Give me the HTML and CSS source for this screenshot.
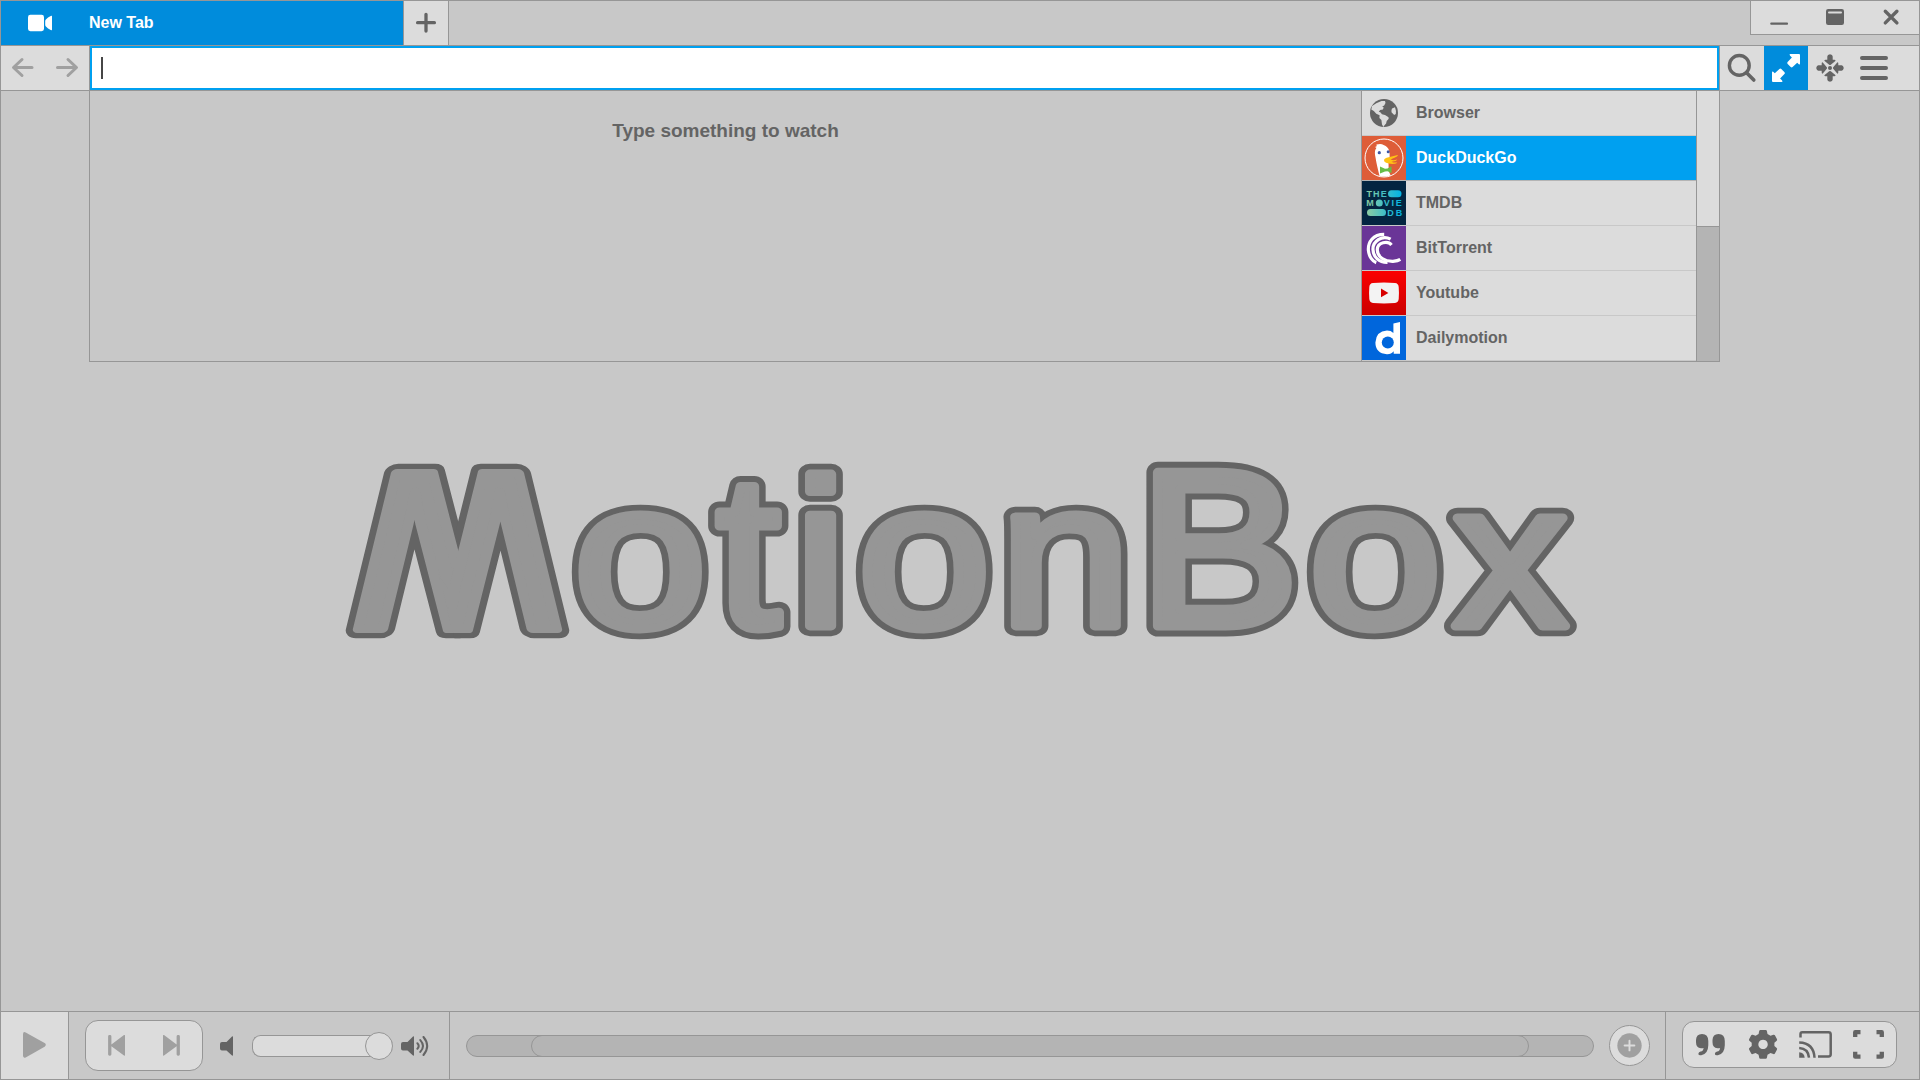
FILE: index.html
```html
<!DOCTYPE html>
<html lang="en">
<head>
<meta charset="utf-8">
<title>MotionBox</title>
<link rel="stylesheet" href="styles.css">
</head>
<body>
<div class="window">
  <header class="tabbar">
    <div class="tab">
      <svg class="tab-icon" viewBox="0 0 88 44"><rect x="27" y="13.8" width="16" height="16.4" rx="2.4"/><path d="M50.2 14.8q.8-.3.8.6v13.2q0 .9-.8.6q-3.6-1.600-5.300-3.700q-.7-.8-.7-1.700v-3.600q0-.9.700-1.700q1.700-2.100 5.300-3.700z"/></svg>
      <span>New Tab</span>
    </div>
    <button class="tab-add" aria-label="New tab"><svg viewBox="0 0 44 44"><path class="line plus" d="M13.600 21.700h16.800M22 13.300v16.800"/></svg></button>
    <div class="controls">
      <svg viewBox="0 0 168 33"><path class="line thin" d="M20.300 22.700h15.700"/><rect class="solid" x="75" y="8" width="18" height="16" rx="2.200"/><rect class="gloss" x="77" y="10.600" width="14" height="2" rx="1"/><path class="line cross" d="M134.300 10.300l11.600 11.600M145.900 10.300l-11.600 11.600"/></svg>
    </div>
  </header>

  <div class="toolbar">
    <div class="nav"><svg viewBox="0 0 88 44"><path d="M31 21.500h-18M21 13.500l-8.500 8l8.500 8M56.500 21.500h18M67 13.500l8.500 8l-8.500 8"/></svg></div>
    <div class="address"><i class="caret"></i></div>
    <div class="tools">
      <svg viewBox="0 0 44 44"><circle class="line search" cx="19.300" cy="19.400" r="9.900"/><path class="line handle" d="M26.800 27l7 7"/></svg>
      <svg class="active" viewBox="0 0 44 44"><path id="expand-arrow" d="M26.300 8H35q1 0 1 1v8.600q0 1.400-1.200.7l-1.600-1.500l-4.600 4.200q-1 .8-1.900-.1l-3-3q-1-1-.1-2l4.300-4.500l-1.800-1.700q-1.300-1.700.2-1.700z"/><use href="#expand-arrow" transform="rotate(180 22 22)"/></svg>
      <svg viewBox="0 0 44 44"><g class="solid"><circle cx="22" cy="22" r="2"/><path id="inward" d="M22 8.200q2.700.5 2.700 2.200v3.300h1.800q1.900.2.600 1.500l-4.300 3.600q-.8.600-1.600 0l-4.300-3.600q-1.300-1.300.6-1.500h1.800v-3.300q0-1.700 2.700-2.200z"/><use href="#inward" transform="rotate(90 22 22)"/><use href="#inward" transform="rotate(180 22 22)"/><use href="#inward" transform="rotate(270 22 22)"/></g></svg>
      <svg viewBox="0 0 44 44"><path class="line menu" d="M10 12h24M10 22h24M10 32h24"/></svg>
    </div>
  </div>

  <main class="stage">
    <section class="browse">
      <p class="hint">Type something to watch</p>
      <ul class="sources">
        <li><svg viewBox="0 0 44 44"><circle class="solid" cx="22" cy="22" r="14"/><path fill="#dcdcdc" d="M14.300 12.200l5.200-2.300l3.500.2l.5 2l-1.300 2.500l-2 .8l1.500 1.200l-.8 2l-2.700.3l-1.400 1.800l1.500.5l1.700 2l3 .7l2.800 1.800q1.600.8.700 2.400l-1.800 2l-.6 2.500l-1.800 2l-.8 1.300l-1.500-2.300l-.6-4.700l-2-2l.2-2.700l-3.300-1.500l-2.500-2.800l-2.500-1.500l.8-3.400zM30 17.500l3-1.200q1.300 3.200.8 6.700l-1.600 1l-2.700-2.800q-.3-2 .5-3.700z"/></svg><span>Browser</span></li>
        <li class="selected"><svg viewBox="0 0 44 44"><path fill="#de5d38" d="M0 0h44v44H0z"/><clipPath id="duck-disc"><circle cx="22" cy="22" r="18.600"/></clipPath><g clip-path="url(#duck-disc)"><path fill="#fff" d="M13.600 11.700q-.6-1.400 1.200-1.500l-.4-1.700q4.600-1.300 7.200.4q4.700 1.700 5.600 6.200q.7 4 .3 7.900l-1 4l.2 8l3 7H18q-3.500-14-4.300-19.500q-2-7.800.8-10.800z"/></g><path fill="#ffc214" d="M22 24.300q0-2.300 4.700-3.100l9-2.100q.8.900-2.700 2.400l-4.500 2q3.500 1.400 6.300 0q.9.400-1.300 1.600l-4 .6q3 1.500 5.300.5q.5 1.500-4.300 1.700q-8.500-.5-8.500-3.600z"/><g fill="#3d56a5"><circle cx="17.300" cy="16.700" r="1.600"/><circle cx="26.200" cy="15.800" r="1.500"/></g><path fill="#67bd47" d="M18 30.600l5 2.200l2.500-.2l4-2.300v6.600l-4-1.700l-2.500.4l-5 1.900z"/><circle class="disc-ring" cx="22" cy="22" r="19"/></svg><span>DuckDuckGo</span></li>
        <li><svg viewBox="0 0 44 44"><defs><linearGradient id="teal" gradientUnits="userSpaceOnUse" x1="4" y1="0" x2="40" y2="0"><stop offset="0" stop-color="#90cea1"/><stop offset=".55" stop-color="#3cbec9"/><stop offset="1" stop-color="#00b3e5"/></linearGradient></defs><path fill="#032541" d="M0 0h44v44H0z"/><g fill="url(#teal)"><rect x="26" y="9.200" width="13.500" height="7" rx="3.500"/><circle cx="17.300" cy="22" r="3.500"/><rect x="5" y="28" width="19" height="7" rx="3.500"/><g class="tmdb"><text x="4.400" y="15.700" textLength="20.300">THE</text><text x="4.200" y="25" textLength="8">M</text><text x="21.700" y="25" textLength="18">VIE</text><text x="25.200" y="34.500" textLength="15">DB</text></g></g></svg><span>TMDB</span></li>
        <li><svg viewBox="0 0 44 44"><path fill="#6a3597" d="M0 0h44v44H0z"/><g class="swirl"><path d="M22.200 8.300C11 8.300 5.800 16 6.400 24.500C7 31 11 35.600 14.300 36.600"/><path d="M28.600 13.200C20 8.500 10.400 15.500 11 23.800C11.300 31 17 36.600 25.500 36.400"/><path d="M29.500 19C26 14.500 15.200 16 15.300 24C15.500 31.500 23 35.500 31 35.300Q36 34.800 38.300 33.300"/></g></svg><span>BitTorrent</span></li>
        <li><svg viewBox="0 0 44 44"><defs><linearGradient id="tube" x2="0" y2="1"><stop offset="0" stop-color="#fb0000"/><stop offset="1" stop-color="#cb0000"/></linearGradient></defs><path fill="url(#tube)" d="M0 0h44v44H0z"/><path fill="#f3f3f3" d="M11 12q11-1 22 0q3.400.3 3.700 4q.5 6 0 12q-.3 3.600-3.700 4q-11 .9-22 0q-3.400-.4-3.700-4q-.5-6 0-12q.3-3.700 3.700-4z"/><path fill="#d80000" d="M19 17.500v8.700l7.400-4.300z"/></svg><span>Youtube</span></li>
        <li><svg viewBox="0 0 44 44"><path fill="#0066dc" d="M0 0h44v44H0z"/><path fill="#fff" d="M31.400 7.500L38 6.100v31.600h-6.300v-2.500Q29.300 38.300 25 38.200Q13.400 37.300 13.400 26.500Q14 15.300 25 14.600Q29 14.600 31.400 17z"/><circle fill="#0066dc" cx="25.800" cy="26.400" r="6"/></svg><span>Dailymotion</span></li>
      </ul>
      <div class="scroll"><div class="thumb"></div></div>
    </section>
    <svg class="logo" viewBox="340 455 1240 190" role="img" aria-label="MotionBox">
      <clipPath id="m-left"><path d="M-50-200H89V50H-50z"/></clipPath>
      <clipPath id="m-right"><path d="M81.600-200H260V50H81.600z"/></clipPath>
      <g class="logo-rim"><g id="wordmark"><g clip-path="url(#m-left)" transform="matrix(1.45 0 -.27 1.107 333.800 629)"><text id="logo-m">M</text></g><g clip-path="url(#m-right)" transform="matrix(1.45 0 .27 1.107 333.800 629)"><use href="#logo-m"/></g><text transform="matrix(1.172 0 0 1.016 573.500 627)">o</text><text transform="matrix(1.138 0 0 1.060 716 627)">t</text><text transform="matrix(1.170 0 0 1.020 794 626)">i</text><text transform="matrix(1.172 0 0 1.016 857.500 627)">o</text><text transform="matrix(1.156 0 0 1.006 999.600 626)">n</text><text transform="matrix(1.183 0 0 1.086 1138 626)">B</text><text transform="matrix(1.172 0 0 1.016 1308.500 627)">o</text><text transform="matrix(1.120 0 0 .998 1453 626)">x</text></g></g>
      <use class="logo-face" href="#wordmark"/>
    </svg>
  </main>

  <footer class="player">
    <div class="play"><svg viewBox="0 0 67 67"><path d="M22 22.200q0-2.900 2.700-1.800L43.600 31q2.400 1.700 0 3.800L24.700 45.400q-2.700 1.100-2.700-1.800z"/></svg></div>
    <div class="transport">
      <div class="skip"><svg viewBox="0 0 116 49"><path d="M23.500 14h.5q1.400 0 1.400 1.400v8L38 14.100q1-.5 1 .5v19.500q0 1-1 .5l-12.600-9.400v8.100q0 1.400-1.400 1.400h-.5q-1.400 0-1.400-1.400V15.400q0-1.400 1.400-1.400zM92.500 14h-.5q-1.400 0-1.400 1.400v8L78 14.100q-1-.5-1 .5v19.500q0 1 1 .5l12.600-9.400v8.100q0 1.400 1.400 1.400h.5q1.400 0 1.400-1.400V15.400q0-1.400-1.400-1.400z"/></svg></div>
      <svg class="speaker low" viewBox="0 0 14 20"><path id="horn" d="M2 6h4.500L12 .500Q13 0 13 1v18q0 1-1 .500L6.500 14.500H2Q0 14.300 0 12.500v-4.500Q0 6.200 2 6z"/></svg>
      <div class="volume"><i class="knob"></i></div>
      <svg class="speaker high" viewBox="0 0 28 20"><use href="#horn"/><path class="waves" d="M16.400 7.300q2.600 2.600 0 5.400M19.300 4.100q5.400 5.900 0 11.800M22.500 1q7.400 9 0 18"/></svg>
    </div>
    <div class="timeline">
      <div class="seek"><div class="range"></div></div>
      <div class="add"><svg viewBox="0 0 40 40"><circle cx="20" cy="20" r="12.500"/><path d="M15 20h10M20 15v10"/></svg></div>
    </div>
    <div class="options">
      <div class="panel"><svg viewBox="0 0 213 46">
        <path class="solid" id="quote" d="M19 12q6.300.2 6.300 7v4.300q-.2 8.800-7 10q-3.200.4-2.900-1.800q.3-1.600 2.200-1.900q2.800-.6 3-3.600q-.8.400-2.600.300q-5-.600-5-6V18q.2-5.800 6-6z"/><use class="solid" href="#quote" x="16.500"/>
        <path class="solid" fill-rule="evenodd" d="M77.400 8h5.300q1 0 1.200 1l.6 3l3 1.700l2.900-1q1-.3 1.500.6l2 3.700q.6 1-.2 1.700l-2.300 2v3.400l2.300 2q.8.700.2 1.700l-2 3.700q-.5.900-1.500.6l-2.900-1l-3 1.700l-.6 3q-.2 1-1.200 1h-5.300q-1 0-1.200-1l-.6-3l-3-1.700l-2.900 1q-1 .3-1.500-.6l-2-3.700q-.6-1 .2-1.700l2.300-2v-3.400l-2.300-2q-.8-.7-.2-1.700l2-3.700q.5-.9 1.500-.6l2.900 1l3-1.700l.6-3q.2-1 1.200-1zM80 17.700a4.700 4.700 0 1 0 .1 0z"/>
        <g class="cast"><path d="M117.500 15.500v-3.500q0-1.800 1.800-1.800h26.200q2.200 0 2.200 2.200v19.800q0 2.200-2.200 2.200H135"/><path d="M116.200 20.500q14.500.5 15.300 15.200M116.200 26q9 .500 9.800 9.700"/></g><path class="solid" d="M116.200 30.200q5 .3 5.500 5.500h-5.500z"/>
        <path class="full" d="M172.200 15v-4.800h5.300M193.500 10.200h5.300V15M198.800 29.800v4.900h-5.300M177.500 34.700h-5.300v-4.900"/>
      </svg></div>
    </div>
  </footer>
</div>
</body>
</html>
```
FILE: styles.css
```css
:root {
  --base: #c8c8c8;
  --light: #dcdcdc;
  --border: #969696;
  --dark: #646464;
  --muted: #a0a0a0;
  --trough: #b4b4b4;
  --blue: #008cdc;
  --sky: #00a0f0;
}
* { box-sizing: border-box; }
body {
  margin: 0;
  font-family: "Liberation Sans", Arial, sans-serif;
  font-weight: bold;
  color: var(--dark);
}
svg { display: block; flex: none; }
.window {
  width: 1920px;
  height: 1080px;
  display: flex;
  flex-direction: column;
  background: var(--base);
  border: 1px solid var(--border);
}
.solid { fill: var(--dark); }
.line { fill: none; stroke: var(--dark); stroke-linecap: round; }
.plus { stroke-width: 3.300; }
.thin { stroke-width: 2.200; }
.cross { stroke-width: 3.400; }
.search { stroke-width: 3.400; }
.handle { stroke-width: 3.600; }
.menu { stroke-width: 4; }
.gloss { fill: var(--light); }

.tabbar {
  height: 45px;
  display: flex;
  align-items: flex-start;
  border-bottom: 1px solid var(--border);
}
.tab {
  width: 402px;
  height: 44px;
  display: flex;
  align-items: center;
  background: var(--blue);
  color: #fff;
  font-size: 16px;
}
.tab-icon { width: 88px; height: 44px; fill: #fff; }
.tab-add {
  width: 46px;
  height: 44px;
  padding: 0;
  border: solid var(--border);
  border-width: 0 1px;
  background: var(--light);
}
.controls {
  width: 169px;
  height: 34px;
  margin-left: auto;
  border: solid var(--border);
  border-width: 0 0 1px 1px;
  background: var(--light);
}

.toolbar {
  height: 45px;
  display: flex;
  background: var(--light);
  border-bottom: 1px solid var(--border);
}
.nav { width: 89px; border-right: 1px solid var(--border); }
.nav svg {
  width: 88px;
  height: 44px;
  fill: none;
  stroke: var(--muted);
  stroke-width: 3;
  stroke-linecap: round;
  stroke-linejoin: round;
}
.address {
  flex: 1;
  padding: 9px;
  background: #fff;
  border: 2px solid var(--sky);
}
.caret { display: block; width: 2px; height: 22px; background: #464646; }
.tools {
  width: 200px;
  display: flex;
  border-left: 1px solid var(--border);
}
.tools svg { width: 44px; height: 44px; }
.tools .active { background: var(--blue); fill: #fff; }

.stage {
  flex: 1;
  display: flex;
  flex-direction: column;
  align-items: flex-start;
}
.browse {
  width: 1631px;
  height: 271px;
  margin-left: 88px;
  display: flex;
  border: solid var(--border);
  border-width: 0 1px 1px;
}
.hint {
  flex: 1;
  margin: 0;
  padding-top: 28px;
  font-size: 19px;
  line-height: 24px;
  text-align: center;
}
.sources {
  width: 336px;
  margin: 0;
  padding: 0;
  list-style: none;
  border: solid var(--border);
  border-width: 0 1px;
  font-size: 16px;
}
.sources li {
  height: 45px;
  display: flex;
  background: var(--light);
  border-bottom: 1px solid var(--base);
  line-height: 44px;
}
.sources svg { width: 44px; height: 44px; margin-right: 10px; }
.sources .selected { background: var(--sky); color: #fff; border-color: var(--trough); }
.sources .selected svg { background: #de5d38; }
.disc-ring { fill: none; stroke: #fff; stroke-width: 1; }
.tmdb { font-size: 9px; font-weight: bold; }
.swirl { fill: none; stroke: #fff; stroke-width: 3.200; }
.scroll { width: 22px; background: var(--trough); }
.thumb { height: 136px; background: var(--light); border-bottom: 1px solid var(--border); }

.logo { width: 1240px; height: 190px; margin: 93px 0 0 339px; }
.logo text { font-size: 204.800px; font-weight: 400; vector-effect: non-scaling-stroke; }
.logo-rim, .logo-face { stroke-linejoin: round; }
.logo-rim { fill: #646464; stroke: #646464; stroke-width: 22px; }
.logo-face { fill: #969696; stroke: #969696; stroke-width: 9.500px; }

.player {
  height: 68px;
  display: flex;
  border-top: 1px solid var(--border);
}
.play { width: 68px; background: var(--light); border-right: 1px solid var(--border); }
.play svg { width: 67px; height: 67px; fill: var(--muted); }
.transport {
  width: 381px;
  display: flex;
  align-items: center;
  padding-left: 16px;
  border-right: 1px solid var(--border);
}
.skip {
  width: 118px;
  height: 51px;
  border: 1px solid var(--border);
  border-radius: 13px;
  background: var(--light);
}
.skip svg { width: 116px; height: 49px; fill: var(--muted); }
.speaker { height: 20px; fill: var(--dark); }
.low { width: 14px; margin-left: 17px; }
.high { width: 28px; margin-left: 8px; }
.waves { fill: none; stroke: var(--dark); stroke-width: 2; stroke-linecap: round; }
.volume {
  width: 141px;
  height: 22px;
  margin-left: 18px;
  display: flex;
  align-items: center;
  justify-content: flex-end;
  background: linear-gradient(90deg, var(--light) 120px, transparent 0);
  border: 1px solid var(--border);
  border-right: 0;
  border-radius: 11px 14px 14px 11px;
}
.knob {
  width: 28px;
  height: 28px;
  flex: none;
  background: var(--light);
  border: 1px solid var(--border);
  border-radius: 50%;
}
.timeline {
  flex: 1;
  display: flex;
  align-items: center;
  padding: 0 14px 0 16px;
  border-right: 1px solid var(--border);
}
.seek {
  width: 1128px;
  height: 22px;
  padding-left: 64px;
  background: var(--trough);
  border: 1px solid var(--border);
  border-radius: 11px;
}
.range {
  width: 998px;
  height: 22px;
  margin-top: -1px;
  border: 1px solid var(--border);
  border-radius: 11px;
}
.add {
  width: 41px;
  height: 41px;
  margin-left: 15px;
  background: var(--light);
  border: 1px solid var(--border);
  border-radius: 50%;
}
.add svg { width: 39px; height: 39px; }
.add circle { fill: var(--muted); }
.add path { stroke: var(--light); stroke-width: 2; stroke-linecap: round; }
.options {
  width: 253px;
  display: flex;
  padding: 9px 0 0 16px;
}
.panel {
  width: 215px;
  height: 47px;
  border: 1px solid var(--border);
  border-radius: 12px;
  background: var(--light);
}
.panel svg { width: 213px; height: 46px; }
.cast, .full { fill: none; stroke: var(--dark); }
.cast { stroke-width: 2.500; }
.full { stroke-width: 4.300; stroke-linejoin: round; }
```
